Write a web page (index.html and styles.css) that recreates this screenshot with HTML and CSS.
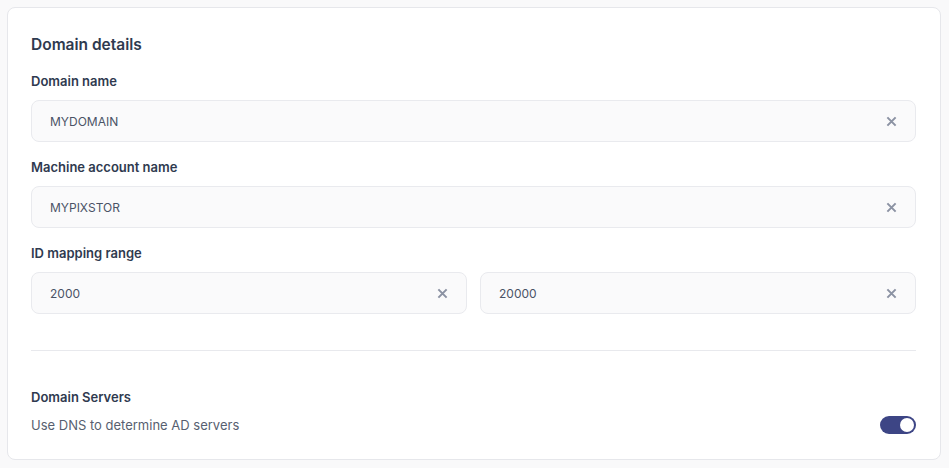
FILE: index.html
```html
<!DOCTYPE html>
<html>

<head>
    <title>Domain details</title>
    <link rel="stylesheet" href="styles.css">
</head>

<body>
    <section class="card">
        <h2 class="card-title">Domain details</h2>

        <div class="field">
            <label class="field-label">Domain name</label>
            <div class="input">
                <span class="input-value">MYDOMAIN</span>
                <svg class="clear" width="12" height="12" viewBox="0 0 12 12"><path d="M1.5 1.5L10.5 10.5M10.5 1.5L1.5 10.5" /></svg>
            </div>
        </div>

        <div class="field">
            <label class="field-label">Machine account name</label>
            <div class="input">
                <span class="input-value">MYPIXSTOR</span>
                <svg class="clear" width="12" height="12" viewBox="0 0 12 12"><path d="M1.5 1.5L10.5 10.5M10.5 1.5L1.5 10.5" /></svg>
            </div>
        </div>

        <div class="field">
            <label class="field-label">ID mapping range</label>
            <div class="range">
                <div class="input">
                    <span class="input-value">2000</span>
                    <svg class="clear" width="12" height="12" viewBox="0 0 12 12"><path d="M1.5 1.5L10.5 10.5M10.5 1.5L1.5 10.5" /></svg>
                </div>
                <div class="input">
                    <span class="input-value">20000</span>
                    <svg class="clear" width="12" height="12" viewBox="0 0 12 12"><path d="M1.5 1.5L10.5 10.5M10.5 1.5L1.5 10.5" /></svg>
                </div>
            </div>
        </div>

        <hr class="divider">

        <div class="servers">
            <div class="field-label">Domain Servers</div>
            <div class="servers-row">
                <span class="servers-text">Use DNS to determine AD servers</span>
                <span class="toggle"><span class="toggle-knob"></span></span>
            </div>
        </div>
    </section>
</body>

</html>
```

FILE: styles.css
```css
html {
    background: #f9f9fa;
}

body {
    margin: 0;
    padding: 7px 8px 9px 7px;
    font-family: Inter, "Liberation Sans", sans-serif;
    color: #2f3a4f;
}

.card {
    background: #ffffff;
    border: 1px solid #e6e7eb;
    border-radius: 8px;
    padding: 23px 24px 20px 23px;
    height: 408px;
}

.card-title {
    margin: 0 0 13px 0;
    font-size: 15.5px;
    font-weight: 600;
    line-height: 28px;
}

.field {
    margin-bottom: 16px;
}

.field-label {
    display: block;
    font-size: 13px;
    font-weight: 600;
    line-height: 18px;
    margin-bottom: 10px;
}

.input {
    display: flex;
    align-items: center;
    justify-content: space-between;
    height: 40px;
    padding: 0 18px 0 18px;
    background: #fafafb;
    border: 1px solid #e9eaee;
    border-radius: 8px;
}

.input-value {
    font-size: 12px;
    color: #4a5366;
}

.clear {
    stroke: #8b92a3;
    stroke-width: 2.2;
    fill: none;
    width: 11px;
    height: 11px;
}

.range {
    display: grid;
    grid-template-columns: 1fr 1fr;
    gap: 13px;
}

.divider {
    border: 0;
    border-top: 1px solid #e8e9ed;
    margin: 36px 0 37px 0;
}

.servers .field-label {
    margin-bottom: 10px;
}

.servers-row {
    display: flex;
    align-items: center;
    justify-content: space-between;
}

.servers-text {
    font-size: 13px;
    color: #575f70;
}

.toggle {
    position: relative;
    display: inline-block;
    width: 36px;
    height: 18px;
    border-radius: 9px;
    background: #3d4585;
}

.toggle-knob {
    position: absolute;
    right: 2px;
    top: 2px;
    width: 14px;
    height: 14px;
    border-radius: 50%;
    background: #ffffff;
}
```
